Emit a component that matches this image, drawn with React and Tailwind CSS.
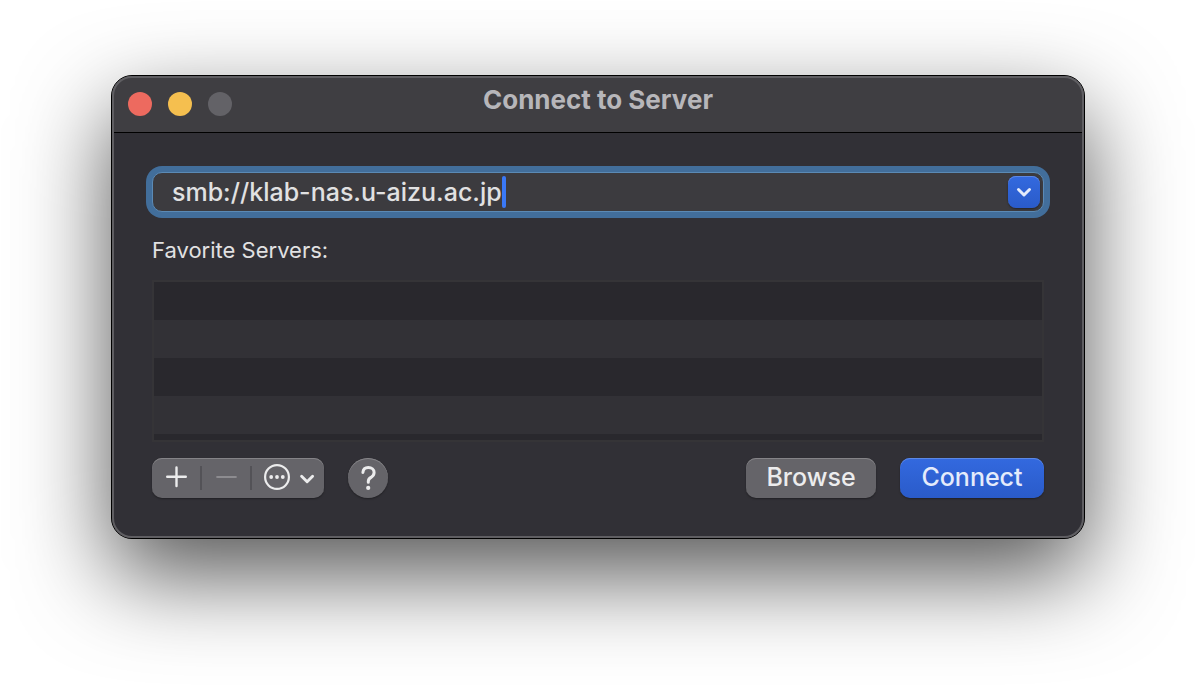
import { useState } from "react";

const rowTones = ["bg-[#29282d]", "bg-[#323136]", "bg-[#29282d]", "bg-[#323136]"];

function TitleBar() {
  return (
    <header className="grid h-14 grid-cols-[1fr_auto_1fr] items-center bg-[#3f3e42] px-4">
      <div className="flex gap-4">
        <button type="button" aria-label="Close" className="size-6 rounded-full bg-[#ed6a5f]" />
        <button type="button" aria-label="Minimize" className="size-6 rounded-full bg-[#f5bf4f]" />
        <button type="button" aria-label="Zoom" disabled className="size-6 rounded-full bg-[#636267]" />
      </div>
      <h1 className="pb-2 text-[26px] leading-8 font-bold text-[#b7b6ba]">Connect to Server</h1>
    </header>
  );
}

function AddressField() {
  const [address, setAddress] = useState("smb://klab-nas.u-aizu.ac.jp");
  return (
    <div className="flex h-10 items-center rounded-[10px] border border-[#5b8ab5] bg-[#3c3b3f] pr-[3px] pl-[19px] ring-[6px] ring-[#426e9b]">
      <div className="flex min-w-0 flex-1 items-center">
        <input
          type="text"
          aria-label="Server address"
          value={address}
          onChange={(e) => setAddress(e.target.value)}
          className="field-sizing-content max-w-full bg-transparent text-[25px] leading-8 font-medium text-[#e1e1e2] caret-transparent outline-none"
        />
        <span aria-hidden="true" className="h-8 w-1 shrink-0 rounded-xs bg-[#3a78f6]" />
      </div>
      <button
        type="button"
        aria-label="Recent servers"
        className="flex size-8 items-center justify-center rounded-lg bg-linear-to-b from-[#3369df] to-[#2a5bc9] shadow-[inset_0_1px_0_#5c88e6,0_1px_2px_rgba(0,0,0,0.4)]"
      >
        <svg viewBox="0 0 16 16" className="size-4" fill="none" stroke="#e4ebfb" strokeWidth="3" strokeLinecap="round" strokeLinejoin="round" aria-hidden="true">
          <path d="M2.5 5.5 8 11l5.5-5.5" />
        </svg>
      </button>
    </div>
  );
}

function FavoriteList() {
  return (
    <ul aria-labelledby="favorites-label" className="h-[162px] overflow-hidden border-2 border-[#353437] bg-[#29282d]">
      {rowTones.map((tone, i) => (
        <li key={i} className={`h-[38px] ${tone}`} />
      ))}
    </ul>
  );
}

const raised = "shadow-[inset_0_1px_0_#858488,0_1px_2px_rgba(0,0,0,0.35)]";

function ListActions() {
  return (
    <div className={`flex h-10 items-center rounded-[10px] bg-[#656469] ${raised}`}>
      <button type="button" aria-label="Add" className="flex h-10 w-12 items-center justify-center">
        <svg viewBox="0 0 24 24" className="size-6" fill="none" stroke="#ececed" strokeWidth="2.4" strokeLinecap="round" aria-hidden="true">
          <path d="M3.2 10.7h18.6M12.5 1.4v18.6" />
        </svg>
      </button>
      <span className="h-6 w-0.5 bg-[#535257]" />
      <button type="button" aria-label="Remove" disabled className="flex h-10 w-12 items-center justify-center">
        <svg viewBox="0 0 24 24" className="size-6" fill="none" stroke="#8d8c90" strokeWidth="2.2" strokeLinecap="round" aria-hidden="true">
          <path d="M3.2 11h18.6" />
        </svg>
      </button>
      <span className="h-6 w-0.5 bg-[#535257]" />
      <button type="button" aria-label="More actions" className="flex h-10 w-[72px] items-center justify-center">
        <svg viewBox="0 0 56 28" className="h-7 w-14" fill="none" stroke="#ececed" aria-hidden="true">
          <circle cx="17" cy="13" r="11.9" strokeWidth="2.2" />
          <g fill="#ececed" stroke="none">
            <circle cx="11.2" cy="13" r="1.9" />
            <circle cx="17" cy="13" r="1.9" />
            <circle cx="22.8" cy="13" r="1.9" />
          </g>
          <path d="m41.6 12.2 5.5 5.5 5.5-5.5" strokeWidth="2.9" strokeLinecap="round" strokeLinejoin="round" />
        </svg>
      </button>
    </div>
  );
}

export default function App() {
  return (
    <main className="flex min-h-screen items-start bg-white px-[111px] pt-[75px] font-['Inter','Liberation_Sans',sans-serif]">
      <section className="relative min-w-0 flex-1 rounded-[21px] border border-black bg-[#313036] shadow-[0_36px_92px_rgba(0,0,0,0.67)]">
        <div className="overflow-hidden rounded-[20px]">
          <TitleBar />
          <form className="flex flex-col border-t border-black px-10 pt-[39px] pb-10" onSubmit={(e) => e.preventDefault()}>
            <AddressField />
            <h2 id="favorites-label" className="mt-6 mb-4 text-[22px] leading-7 text-[#e1e1e2]">
              Favorite Servers:
            </h2>
            <FavoriteList />
            <div className="mt-4 flex items-center gap-6">
              <ListActions />
              <button type="button" aria-label="Help" className={`flex size-10 items-center justify-center rounded-full bg-[#656469] ${raised}`}>
                <svg viewBox="0 0 40 40" className="size-10" fill="none" aria-hidden="true">
                  <path d="M14.9 14.4c.3-3.1 2.3-4.8 5.4-4.8 3.3 0 5.8 1.9 5.8 4.9 0 2.2-1.1 3.6-3.1 4.9-2 1.2-2.7 2.2-2.7 4v.8" stroke="#ececed" strokeWidth="3" strokeLinecap="round" strokeLinejoin="round" />
                  <circle cx="20.2" cy="29.9" r="2.1" fill="#ececed" />
                </svg>
              </button>
              <button type="button" className={`ml-auto h-10 w-[130px] rounded-[10px] bg-[#656469] pb-0.5 text-[25px] leading-8 font-medium text-[#ececed] ${raised}`}>
                Browse
              </button>
              <button
                type="submit"
                className="h-10 w-36 rounded-[10px] bg-linear-to-b from-[#3369df] to-[#2a5bc9] pb-0.5 text-[25px] leading-8 font-medium text-[#e4ebfb] shadow-[inset_0_1px_0_#5c88e6,0_1px_2px_rgba(0,0,0,0.35)]"
              >
                Connect
              </button>
            </div>
          </form>
        </div>
        <div aria-hidden="true" className="pointer-events-none absolute inset-0 rounded-[20px] border-2 border-[#5f5e62]" />
      </section>
    </main>
  );
}
